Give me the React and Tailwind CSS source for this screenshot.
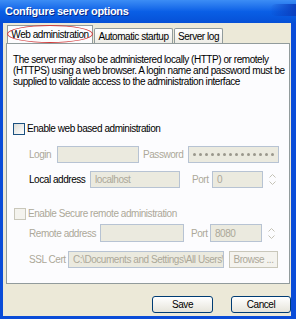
import React from 'react';

const font = { fontFamily: '"Liberation Sans", Arial, sans-serif' };

function Checkbox({ disabled }) {
  return (
    <span
      className={`inline-block shrink-0 w-[12px] h-[12px] border ${
        disabled ? 'border-[#C9C7BA] bg-[#F4F3EE]' : 'border-[#1C5180] bg-gradient-to-br from-[#DCDCD7] to-white'
      }`}
    />
  );
}

function Dots() {
  return (
    <div className="flex gap-[3px]">
      {Array.from({ length: 14 }).map((_, i) => (
        <span key={i} className="w-[3px] h-[3px] rounded-full bg-[#9A988C]" />
      ))}
    </div>
  );
}

function Field({ w, h = 'h-[17px]', value, dots }) {
  return (
    <div
      className={`${w} ${h} shrink-0 border border-[#B7C3D3] bg-[#EBEADF] flex items-center pl-[4px] text-[#ACA899] overflow-hidden whitespace-nowrap`}
    >
      {dots ? <Dots /> : value}
    </div>
  );
}

function Spinner() {
  return (
    <div className="w-[10px] h-[17px] flex flex-col items-center justify-center gap-[3px] text-[#C4C2B6]">
      <svg width="7" height="4" viewBox="0 0 7 4">
        <path d="M0.5 3.5 L3.5 0.5 L6.5 3.5" stroke="currentColor" fill="none" />
      </svg>
      <svg width="7" height="4" viewBox="0 0 7 4">
        <path d="M0.5 0.5 L3.5 3.5 L6.5 0.5" stroke="currentColor" fill="none" />
      </svg>
    </div>
  );
}

function XpButton({ children, w }) {
  return (
    <button className={`${w} h-[17px] rounded-[3px] border border-[#003C74] bg-gradient-to-b from-white to-[#E6E4DA] text-black text-[10px] leading-none`}>
      {children}
    </button>
  );
}

export default function App() {
  return (
    <div style={font} className="w-[296px] h-[319px] flex flex-col bg-[#0A4CD8] text-[10px] tracking-[-0.45px] text-black overflow-hidden whitespace-nowrap">
      {/* Title bar */}
      <div className="h-[23px] shrink-0 flex items-center pl-[5px] bg-gradient-to-b from-[#3C8DF5] via-[#0A5FE6] to-[#0650D6] relative">
        <span className="text-white font-bold text-[11px] tracking-[-0.3px] [text-shadow:1px_1px_0_#0A2A8A]">
          Configure server options
        </span>
        <div className="absolute right-0 top-[4px] w-[26px] h-[12px] bg-gradient-to-r from-transparent to-[#0B3FBF] rounded-l-full" />
      </div>

      {/* Body */}
      <div className="h-[293px] shrink-0 ml-[3px] mr-[5px] bg-[#ECE9D8] flex flex-col">
        {/* Tabs */}
        <div className="flex items-end pl-[4px] pt-[2px] h-[20px]">
          <div className="relative h-[18px] w-[86px] bg-[#FCFCFE] border-x border-t border-[#919B9C] flex items-center justify-center z-10">
            Web administration
            <div className="absolute left-[-1px] right-[-1px] top-[-1px] bottom-0 rounded-[50%] border border-[#D23C3C]" />
          </div>
          <div className="h-[15px] w-[79px] ml-[1px] border-x border-t border-[#919B9C] bg-gradient-to-b from-white to-[#EDECE6] flex items-center justify-center rounded-t-[2px]">
            Automatic startup
          </div>
          <div className="h-[15px] w-[49px] ml-[1px] border-x border-t border-[#919B9C] bg-gradient-to-b from-white to-[#EDECE6] flex items-center justify-center rounded-t-[2px]">
            Server log
          </div>
        </div>

        {/* Panel */}
        <div className="ml-[3px] w-[284px] h-[241px] shrink-0 border border-[#919B9C] bg-[#FCFCFE] flex flex-col">
          <p className="pl-[6px] pr-[4px] pt-[10px] leading-[11px]">
            The server may also be administered locally (HTTP) or remotely
            <br />
            (HTTPS) using a web browser. A login name and password must be
            <br />
            supplied to validate access to the administration interface
          </p>

          <label className="flex items-center gap-[2px] pl-[6px] mt-[34px] h-[15px]">
            <Checkbox />
            <span>Enable web based administration</span>
          </label>

          <div className="flex items-center pl-[22px] mt-[10px]">
            <span className="w-[28px] text-[#ACA899]">Login</span>
            <Field w="w-[82px]" />
            <span className="ml-[4px] w-[45px] text-[#ACA899]">Password</span>
            <Field w="w-[91px]" dots />
          </div>

          <div className="flex items-center pl-[22px] mt-[8px]">
            <span className="w-[61px]">Local address</span>
            <Field w="w-[90px]" value="localhost" />
            <span className="ml-[12px] w-[20px] text-[#ACA899]">Port</span>
            <Field w="w-[51px]" value="0" />
            <div className="ml-[4px]">
              <Spinner />
            </div>
          </div>

          <label className="flex items-center gap-[2px] pl-[7px] mt-[18px] h-[15px] text-[#ACA899]">
            <Checkbox disabled />
            <span>Enable Secure remote administration</span>
          </label>

          <div className="flex items-center pl-[22px] mt-[3px]">
            <span className="w-[71px] text-[#ACA899]">Remote address</span>
            <Field w="w-[84px]" h="h-[18px]" />
            <span className="ml-[7px] w-[19px] text-[#ACA899]">Port</span>
            <Field w="w-[52px]" h="h-[18px]" value="8080" />
            <div className="ml-[4px]">
              <Spinner />
            </div>
          </div>

          <div className="flex items-center pl-[22px] mt-[9px]">
            <span className="w-[39px] text-[#ACA899]">SSL Cert</span>
            <Field w="w-[156px]" value="C:\Documents and Settings\All Users\" />
            <div className="ml-[5px] w-[49px] h-[17px] border border-[#C9C7BA] bg-[#F4F3EE] flex items-center justify-center text-[#ACA899]">
              Browse ...
            </div>
          </div>
        </div>

        {/* Buttons */}
        <div className="flex justify-end gap-[18px] mt-[12px]">
          <XpButton w="w-[61px]">Save</XpButton>
          <XpButton w="w-[60px]">Cancel</XpButton>
        </div>
      </div>
    </div>
  );
}
